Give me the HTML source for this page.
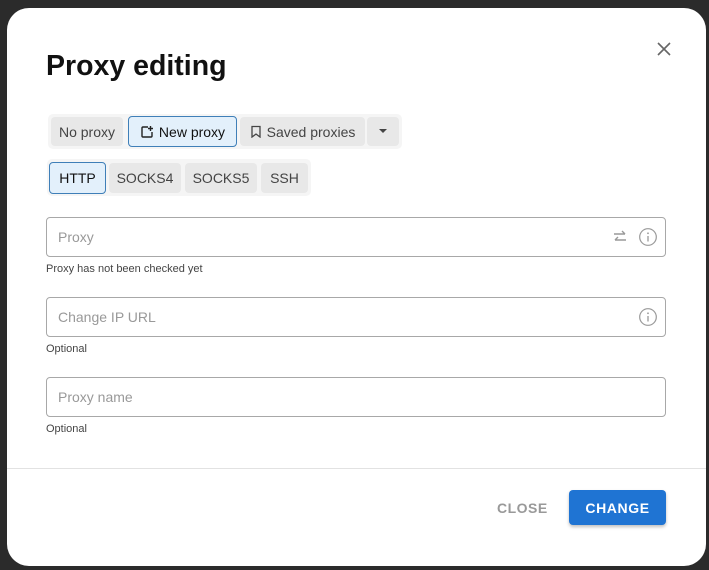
<!DOCTYPE html>
<html><head><style>
*{box-sizing:border-box;margin:0;padding:0}
body{width:709px;height:570px;background:#2b2b2b;font-family:"Liberation Sans",Arial,sans-serif;position:relative;overflow:hidden}
.dlg{position:absolute;left:7px;top:8px;width:699px;height:558px;background:#fff;border-radius:22px}
.a{position:absolute}
h1{position:absolute;left:46px;top:50px;font-size:28.5px;font-weight:bold;color:#111}
.grp{position:absolute;background:#f5f5f5;border-radius:5px}
.b{position:absolute;background:#e8e8e8;border-radius:4px;font-size:14px;color:#444;display:flex;align-items:center;justify-content:center;gap:5px}
.b.sel{background:#e3f0fb;border:1px solid #3f7fb8;color:#111}
.in{position:absolute;left:46px;width:620px;height:40px;border:1px solid #a8a8a8;border-radius:4px;font-size:14px;color:#999;padding:11px 0 0 11px}
.h{position:absolute;left:46px;font-size:11px;color:#444}
</style></head><body>
<div class="dlg"></div>
<svg class="a" style="left:656px;top:41px" width="16" height="16"><path d="M2 2L14 14M14 2L2 14" stroke="#666" stroke-width="1.6"/></svg>
<h1>Proxy editing</h1>
<div class="grp" style="left:48px;top:114px;width:354px;height:35px"></div>
<div class="b" style="left:51px;top:117px;width:72px;height:29px">No proxy</div>
<div class="b sel" style="left:128px;top:116px;width:109px;height:31px"><svg width="14" height="14"><path d="M8 2H3Q2 2 2 3V11Q2 12 3 12H11Q12 12 12 11V7M10.5 1V6M8 3.5H13" stroke="#222" fill="none" stroke-width="1.4"/></svg>New proxy</div>
<div class="b" style="left:240px;top:117px;width:125px;height:29px"><svg width="12" height="13"><path d="M2 1.5H10V12L6 9L2 12Z" stroke="#444" fill="none" stroke-width="1.3"/></svg>Saved proxies</div>
<div class="b" style="left:367px;top:117px;width:32px;height:29px"><svg width="8" height="5"><path d="M0 0H8L4 4Z" fill="#444"/></svg></div>
<div class="grp" style="left:47px;top:159px;width:264px;height:37px"></div>
<div class="b sel" style="left:49px;top:162px;width:57px;height:32px">HTTP</div>
<div class="b" style="left:109px;top:163px;width:72px;height:30px">SOCKS4</div>
<div class="b" style="left:185px;top:163px;width:72px;height:30px">SOCKS5</div>
<div class="b" style="left:261px;top:163px;width:47px;height:30px">SSH</div>
<div class="in" style="top:217px">Proxy</div>
<svg class="a" style="left:612px;top:229px" width="16" height="16"><path d="M2 5H13M10 2L13 5M14 11H3M6 8L3 11" stroke="#999" fill="none" stroke-width="1.4"/></svg>
<svg class="a" style="left:638px;top:227px" width="20" height="20"><circle cx="10" cy="10" r="8.3" stroke="#999" fill="none" stroke-width="1.2"/><path d="M10 9V14.5" stroke="#999" stroke-width="1.3"/><circle cx="10" cy="6.3" r="0.9" fill="#999"/></svg>
<div class="h" style="top:263px">Proxy has not been checked yet</div>
<div class="in" style="top:297px">Change IP URL</div>
<svg class="a" style="left:638px;top:307px" width="20" height="20"><circle cx="10" cy="10" r="8.3" stroke="#999" fill="none" stroke-width="1.2"/><path d="M10 9V14.5" stroke="#999" stroke-width="1.3"/><circle cx="10" cy="6.3" r="0.9" fill="#999"/></svg>
<div class="h" style="top:343px">Optional</div>
<div class="in" style="top:377px">Proxy name</div>
<div class="h" style="top:423px">Optional</div>
<div class="a" style="left:7px;top:468px;width:699px;height:1px;background:#e2e2e2"></div>
<div class="a" style="left:497px;top:500px;font-size:14px;font-weight:bold;color:#999;letter-spacing:0.5px">CLOSE</div>
<div class="a" style="left:569px;top:490px;width:97px;height:35px;background:#1f74d3;border-radius:4px;box-shadow:0 2px 3px rgba(0,0,0,.25);color:#fff;font-size:14px;font-weight:bold;letter-spacing:.6px;display:flex;align-items:center;justify-content:center">CHANGE</div>
</body></html>
